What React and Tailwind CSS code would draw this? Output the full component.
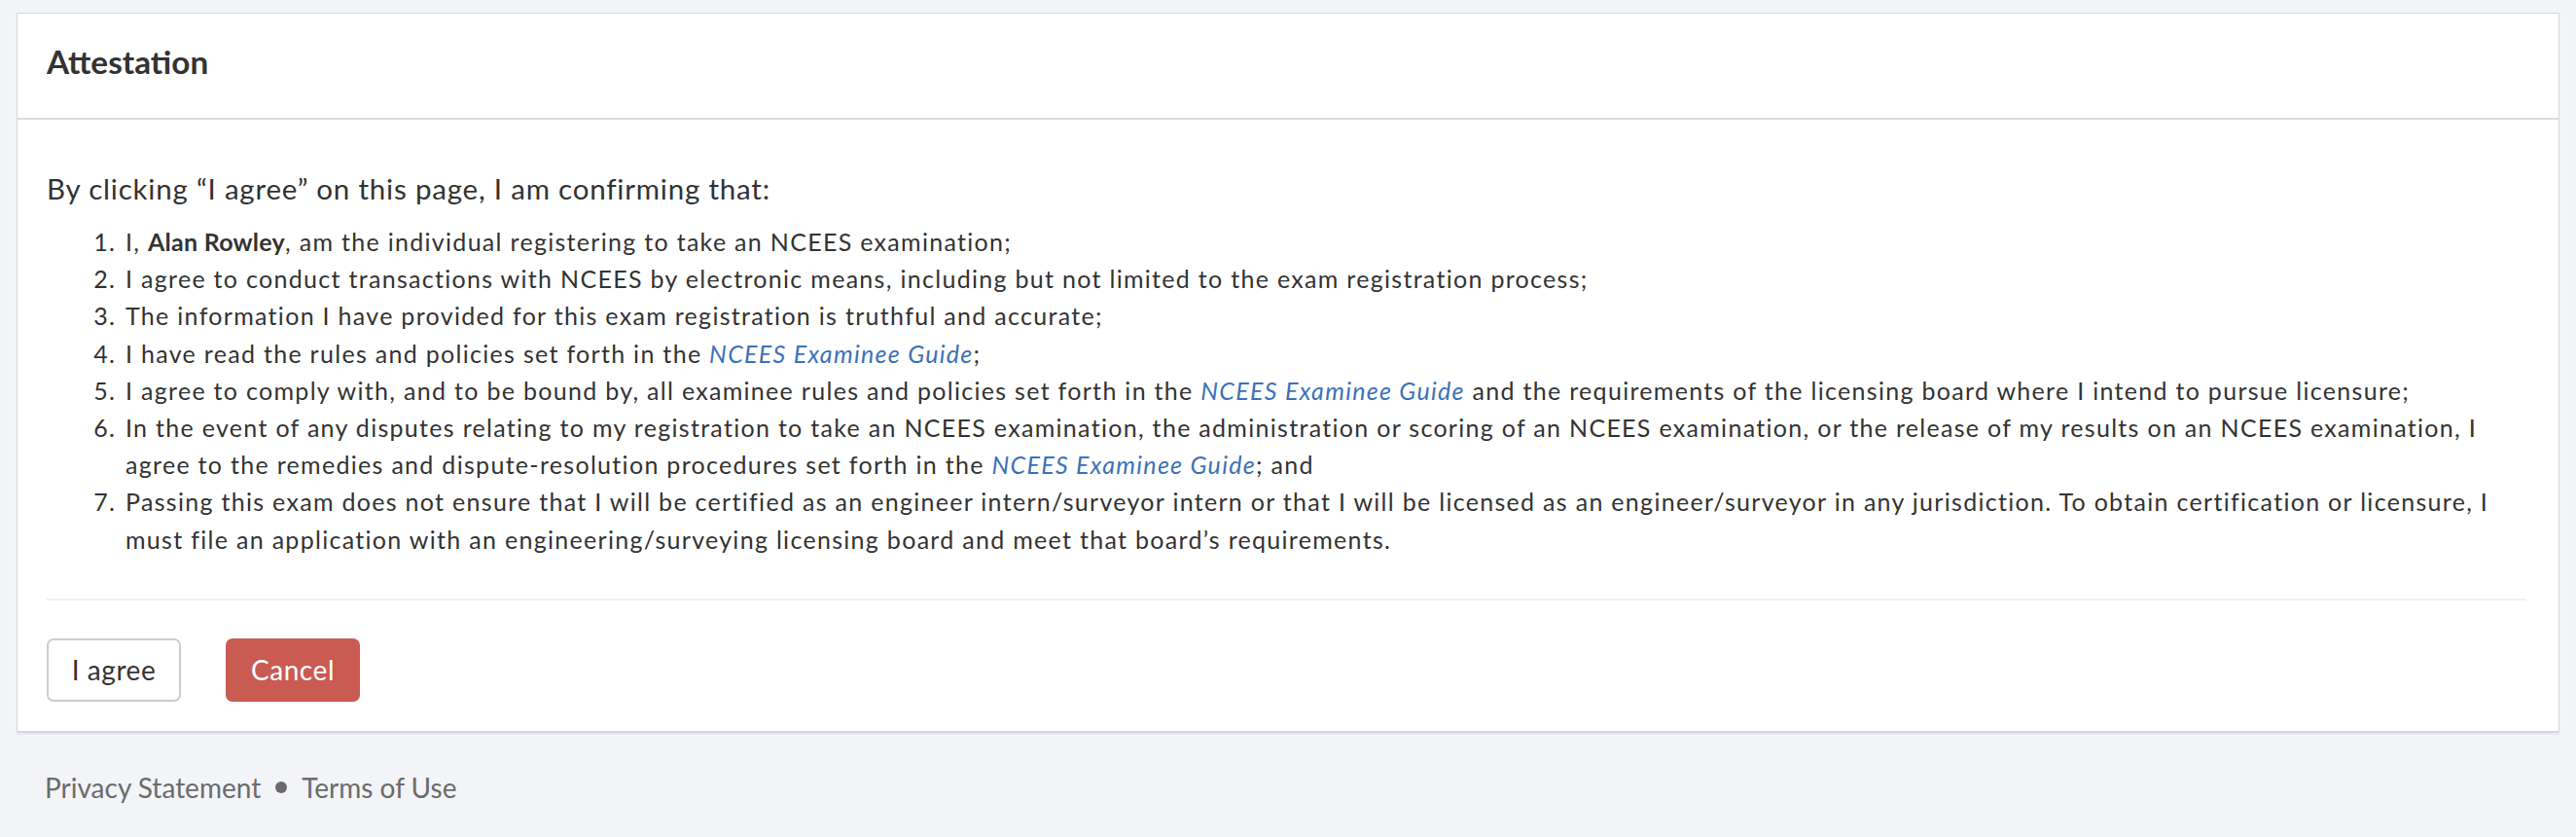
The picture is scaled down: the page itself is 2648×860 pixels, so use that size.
const guideLink = (
  <a href="#" className="italic text-[#3b72b7]">
    NCEES Examinee Guide
  </a>
)

const items = [
  <>
    I, <strong className="font-bold tracking-[0.01em]">Alan Rowley</strong>, am the individual registering to take an
    NCEES examination;
  </>,
  <>I agree to conduct transactions with NCEES by electronic means, including but not limited to the exam registration process;</>,
  <>The information I have provided for this exam registration is truthful and accurate;</>,
  <>I have read the rules and policies set forth in the {guideLink};</>,
  <>
    I agree to comply with, and to be bound by, all examinee rules and policies set forth in the {guideLink} and the
    requirements of the licensing board where I intend to pursue licensure;
  </>,
  <>
    In the event of any disputes relating to my registration to take an NCEES examination, the administration or scoring
    of an NCEES examination, or the release of my results on an NCEES examination, I agree to the remedies and
    dispute-resolution procedures set forth in the {guideLink}; and
  </>,
  <>
    Passing this exam does not ensure that I will be certified as an engineer intern/surveyor intern or that I will be
    licensed as an engineer/surveyor in any jurisdiction. To obtain certification or licensure, I must file an application
    with an engineering/surveying licensing board and meet that board’s requirements.
  </>,
]

export default function App() {
  return (
    <div className="min-h-screen bg-[#f2f4f8] pt-[13px] font-['Lato','Liberation_Sans',sans-serif] text-[#333]">
      <div className="mx-[17px] border border-b-2 border-[#d2d8e0] bg-white shadow-[0_2px_0_#e6e9ee]">
        <div className="flex h-[109px] items-center border-b-2 border-[#dcdcdc] px-[30px] pb-[8px]">
          <h3 className="text-[33.3px] font-bold leading-none text-[#333]">Attestation</h3>
        </div>

        <div className="px-[30px] pb-[30px]">
          <p className="mt-[53px] text-[29.5px] leading-[36px] tracking-[0.027em]">
            By clicking “I agree” on this page, I am confirming that:
          </p>

          <ol className="mt-[17px] list-decimal pl-[79px] text-[25px] leading-[38.2px] tracking-[0.052em]">
            {items.map((item, i) => (
              <li key={i} className="pl-[2px]">
                {item}
              </li>
            ))}
          </ol>

          <div className="mt-[42px] mr-[4px] border-t-2 border-[#f0f0f0]" />

          <div className="mt-[39px] flex gap-[46px]">
            <button className="h-[65px] w-[138px] rounded-[7px] border-2 border-[#cccccc] bg-white text-[28px] tracking-[0.02em] text-[#333]">
              I agree
            </button>
            <button className="h-[65px] w-[138px] rounded-[7px] bg-[#c95b53] text-[28px] tracking-[0.02em] text-white">
              Cancel
            </button>
          </div>
        </div>
      </div>

      <div className="flex items-center gap-[15px] px-[46px] pt-[35px] text-[28px] text-[#6b6b6b]">
        <a href="#">Privacy Statement</a>
        <span className="h-[12px] w-[12px] rounded-full bg-[#6b6b6b]" />
        <a href="#">Terms of Use</a>
      </div>
    </div>
  )
}
